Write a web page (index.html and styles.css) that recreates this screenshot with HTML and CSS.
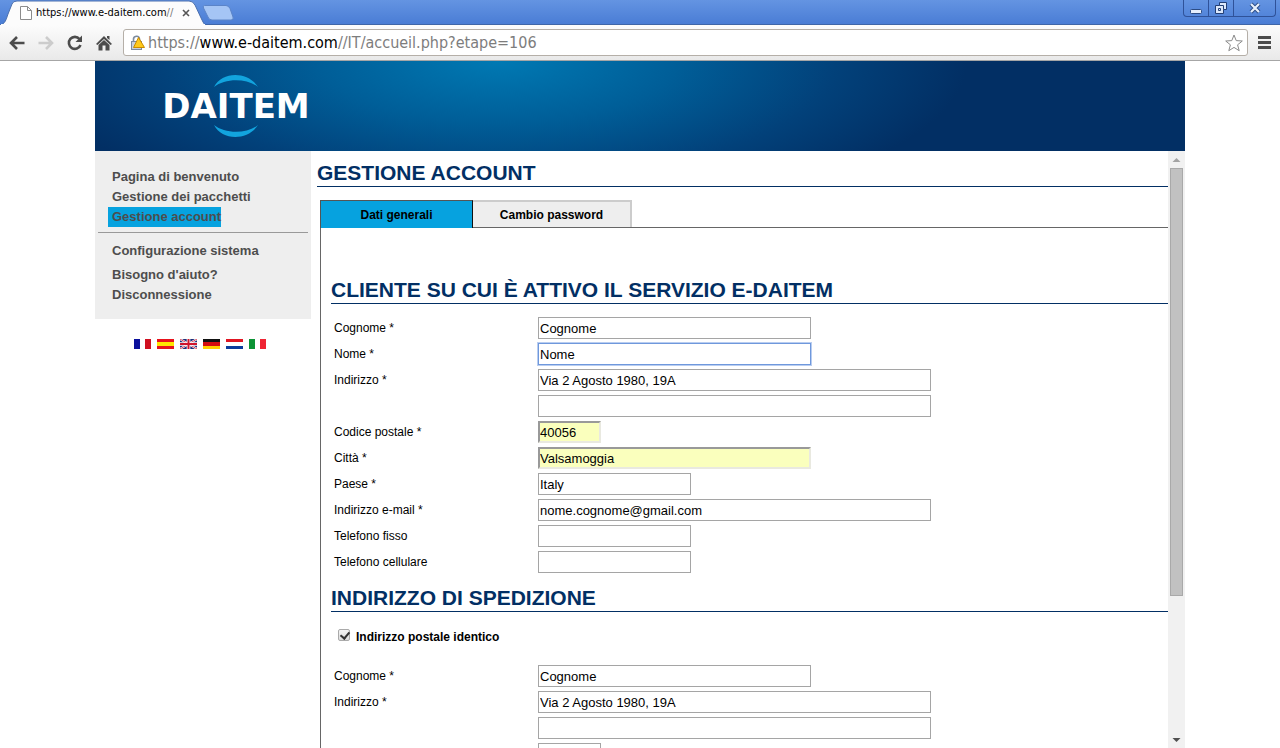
FILE: index.html
```html
<!DOCTYPE html>
<html lang="it">
<head>
<meta charset="utf-8">
<title>Gestione account</title>
<link rel="stylesheet" href="styles.css">
</head>
<body>
<div class="tabstrip">
  <div class="browser-tab">
    <svg class="tab-shape" width="206" height="25" viewBox="0 0 206 25" aria-hidden="true"><path d="M0 25C5 24 6 20 8 14L12 4Q13 1 17 1H189Q193 1 195 5L202 20Q204 25 206 25Z" fill="#fcfcfc" stroke="#4a6fae" stroke-width="1"/><path d="M1 25H205" stroke="#fcfcfc" stroke-width="2"/></svg>
    <svg class="page-icon" width="12" height="14" viewBox="0 0 12 14" aria-hidden="true"><path d="M.5.5H7.5L11.5 4.500V13.500H.5ZM7.500.5V4.500H11.500" fill="#fff" stroke="#8c8c8c"/></svg>
    <span class="tab-title">https://www.e-daitem.com<span class="faded">//</span></span>
    <button class="tab-close" aria-label="Chiudi scheda"><svg width="8" height="8" viewBox="0 0 8 8"><path d="M1 1L7 7M7 1L1 7" stroke="#555" stroke-width="1.600"/></svg></button>
  </div>
  <button class="new-tab" aria-label="Nuova scheda"><svg width="32" height="16" viewBox="0 0 32 16"><path d="M2.500.5H24Q26.500.5 28 3.500L31 12Q32 15 29 15H10Q7 15 6 12L1.500 3Q.5.5 2.500.5Z" fill="#a5c5f5" stroke="#5b84c8"/></svg></button>
  <div class="window-buttons">
    <button aria-label="Riduci a icona"><svg width="12" height="14" viewBox="0 0 12 14"><rect x=".5" y="8.500" width="11" height="4" rx="1" fill="#e5eefc" stroke="#2c4c85"/></svg></button>
    <button aria-label="Ripristina"><svg width="12" height="14" viewBox="0 0 12 14"><path d="M4.500 1.500H11.500V8.500H8.500V12.500H.5V4.500H4.500Z" fill="#dce8fb" stroke="#233f75"/><path d="M4.500 4.500H8.500V8.500M3.500 7.500H5.500V9.500H3.500Z" fill="none" stroke="#233f75"/></svg></button>
    <button class="close" aria-label="Chiudi"><svg width="12" height="14" viewBox="0 0 12 14"><path d="M2 3L10 11M10 3L2 11" stroke="#2c4c85" stroke-width="4"/><path d="M2 3L10 11M10 3L2 11" stroke="#e8f0fc" stroke-width="2.200"/></svg></button>
  </div>
</div>
<div class="toolbar">
  <div class="nav-group">
    <button class="nav" aria-label="Indietro"><svg width="16" height="14" viewBox="0 0 16 14"><path d="M15.500 7H2.500M8 1L2 7L8 13" fill="none" stroke="#4c4c4c" stroke-width="2.600"/></svg></button>
    <button class="nav" aria-label="Avanti"><svg width="16" height="14" viewBox="0 0 16 14"><path d="M.5 7H13.500M8 1L14 7L8 13" fill="none" stroke="#ccc" stroke-width="2.600"/></svg></button>
    <button class="nav" aria-label="Ricarica"><svg width="16" height="16" viewBox="0 0 16 16"><path d="M12.500 4A6 6 0 1 0 13.500 10" fill="none" stroke="#4c4c4c" stroke-width="2.600"/><path d="M15 .5V7H8.500Z" fill="#4c4c4c"/></svg></button>
    <button class="nav" aria-label="Pagina iniziale"><svg width="16" height="16" viewBox="0 0 16 16"><path d="M8 1L16 9L14.500 10L8 4L1.500 10L0 9ZM11 1H13.500V5L11 3ZM2.500 10L8 5L13.500 10V15.500H9.500V10.500H6.500V15.500H2.500Z" fill="#4c4c4c"/></svg></button>
  </div>
  <div class="omnibox">
    <svg width="16" height="16" viewBox="0 0 16 16" aria-hidden="true"><path d="M3.500 6V4.500A3 3 0 0 1 9.500 4V6" fill="none" stroke="#7d8b9e" stroke-width="1.600"/><rect x="1.500" y="6.500" width="10" height="8" fill="#c9d1de" stroke="#7d8b9e"/><path d="M8.500 2.500L14.500 12.500H3.500Z" fill="#ffc91a" stroke="#c98b00" stroke-linejoin="round"/></svg>
    <div class="url"><span>https://</span>www.e-daitem.com<span>//IT/accueil.php?etape=106</span></div>
    <button class="star" aria-label="Preferiti"><svg width="18" height="18" viewBox="0 0 18 18"><path d="M9 1L11.200 6.600L17.300 7L12.600 10.800L14.200 16.700L9 13.400L3.800 16.700L5.400 10.800L.7 7L6.800 6.600Z" fill="#fff" stroke="#8a8a8a" stroke-linejoin="round"/></svg></button>
  </div>
  <button class="menu" aria-label="Menu"><svg width="13" height="13" viewBox="0 0 13 13"><path d="M0 1.500H13M0 6.500H13M0 11.500H13" stroke="#4c4c4c" stroke-width="3"/></svg></button>
</div>

<div class="site">
  <header class="banner">
    <div class="logo">
      <svg width="44" height="12" viewBox="0 0 44 12" aria-hidden="true"><path d="M0 12C8-4 34-4 44 12C33 3 11 3 0 12Z" fill="#12a4de"/></svg>
      <span>DAITEM</span>
      <svg width="44" height="12" viewBox="0 0 44 12" aria-hidden="true"><path d="M0 0C8 16 34 16 44 0C33 9 11 9 0 0Z" fill="#12a4de"/></svg>
    </div>
  </header>
  <div class="columns">
    <aside class="side">
      <nav class="menu-box">
        <a href="#">Pagina di benvenuto</a>
        <a href="#">Gestione dei pacchetti</a>
        <a href="#" class="current">Gestione account</a>
        <hr>
        <a href="#" class="config">Configurazione sistema</a>
        <a href="#">Bisogno d'aiuto?</a>
        <a href="#">Disconnessione</a>
      </nav>
      <div class="flags">
        <a href="#" aria-label="Français"><svg width="17" height="10"><rect width="17" height="10" fill="#fff"/><rect width="6" height="10" fill="#0b109c"/><rect x="11" width="6" height="10" fill="#cf1020"/></svg></a>
        <a href="#" aria-label="Español"><svg width="17" height="10"><rect width="17" height="10" fill="#e8121b"/><rect y="3" width="17" height="4" fill="#ffe600"/></svg></a>
        <a href="#" aria-label="English"><svg width="17" height="10" viewBox="0 0 17 10"><rect width="17" height="10" fill="#1d2f78"/><path d="M0 0L17 10M17 0L0 10" stroke="#fff" stroke-width="2"/><path d="M0 0L17 10M17 0L0 10" stroke="#d0142c" stroke-width=".8"/><path d="M8.500 0V10M0 5H17" stroke="#fff" stroke-width="3.600"/><path d="M8.500 0V10M0 5H17" stroke="#d0142c" stroke-width="2"/></svg></a>
        <a href="#" aria-label="Deutsch"><svg width="17" height="10"><rect width="17" height="10" fill="#111"/><rect y="3" width="17" height="4" fill="#d40d10"/><rect y="7" width="17" height="3" fill="#ffcf00"/></svg></a>
        <a href="#" aria-label="Nederlands"><svg width="17" height="10"><rect width="17" height="10" fill="#fff"/><rect width="17" height="3" fill="#e01522"/><rect y="7" width="17" height="3" fill="#0b3c9c"/></svg></a>
        <a href="#" aria-label="Italiano"><svg width="17" height="10"><rect width="17" height="10" fill="#fff"/><rect width="6" height="10" fill="#0b9335"/><rect x="11" width="6" height="10" fill="#ef2433"/></svg></a>
      </div>
    </aside>
    <main class="content">
      <h1>GESTIONE ACCOUNT</h1>
      <div class="tabs">
        <button class="tab active">Dati generali</button>
        <button class="tab">Cambio password</button>
      </div>
      <form class="panel">
        <h2>CLIENTE SU CUI È ATTIVO IL SERVIZIO E-DAITEM</h2>
        <div class="fields">
          <label for="cognome">Cognome *</label><input id="cognome" class="mid" value="Cognome">
          <label for="nome">Nome *</label><input id="nome" class="mid focused" value="Nome">
          <label for="ind1">Indirizzo *</label><input id="ind1" class="long" value="Via 2 Agosto 1980, 19A">
          <span></span><input class="long" aria-label="Indirizzo, seconda riga">
          <label for="cap">Codice postale *</label><input id="cap" class="tiny filled" value="40056">
          <label for="citta">Città *</label><input id="citta" class="mid filled" value="Valsamoggia">
          <label for="paese">Paese *</label><input id="paese" class="short" value="Italy">
          <label for="email">Indirizzo e-mail *</label><input id="email" class="long" value="nome.cognome@gmail.com">
          <label for="fisso">Telefono fisso</label><input id="fisso" class="short">
          <label for="cell">Telefono cellulare</label><input id="cell" class="short">
        </div>
        <h2>INDIRIZZO DI SPEDIZIONE</h2>
        <div class="same"><input type="checkbox" id="same" checked><label for="same">Indirizzo postale identico</label></div>
        <div class="fields">
          <label for="cognome2">Cognome *</label><input id="cognome2" class="mid" value="Cognome">
          <label for="ind2">Indirizzo *</label><input id="ind2" class="long" value="Via 2 Agosto 1980, 19A">
          <span></span><input class="long" aria-label="Indirizzo di spedizione, seconda riga">
          <span></span><input class="tiny" aria-label="Codice postale di spedizione">
        </div>
      </form>
    </main>
    <div class="scrollbar" aria-hidden="true">
      <svg width="17" height="17" viewBox="0 0 17 17"><path d="M4.500 11H12.500L8.500 7Z" fill="#a3a3a3"/></svg>
      <div class="track"><div class="thumb"></div></div>
      <svg width="17" height="17" viewBox="0 0 17 17"><path d="M4.500 7H12.500L8.500 11Z" fill="#505050"/></svg>
    </div>
  </div>
</div>
</body>
</html>
```
FILE: styles.css
```css
* { box-sizing: border-box; }

body {
  margin: 0;
  height: 100vh;
  display: flex;
  flex-direction: column;
  overflow: hidden;
  background: #fff;
  color: #000;
  font: 12px/16px "Liberation Sans", Arial, sans-serif;
}

button {
  border: 0;
  padding: 0;
  background: none;
  color: inherit;
  font: inherit;
}

svg { display: block; flex: none; }
h1, h2 { margin: 0; }

/* browser frame */
.tabstrip {
  flex: none;
  display: flex;
  align-items: flex-start;
  height: 25px;
  background: linear-gradient(#6494e2, #4a7dd5);
  border-bottom: 1px solid #3f66a8;
}

.browser-tab {
  position: relative;
  display: flex;
  align-items: center;
  width: 206px;
  height: 25px;
  padding-left: 20px;
}

.tab-shape { position: absolute; left: 0; top: 0; }
.page-icon { position: relative; }

.tab-title {
  position: relative;
  width: 144px;
  padding-left: 4px;
  white-space: nowrap;
  font: 11px/16px "DejaVu Sans Condensed", Tahoma, sans-serif;
}

.faded { color: #777; }
.tab-close { position: relative; margin-left: 6px; }
.new-tab { margin: 5px 0 0 -4px; }

.window-buttons {
  display: flex;
  margin-left: auto;
  margin-right: 4px;
  height: 17px;
  border: 1px solid #2f5299;
  border-top: 0;
  border-radius: 0 0 4px 4px;
}

.window-buttons button {
  display: flex;
  justify-content: center;
  align-items: center;
  width: 25px;
  border-right: 1px solid #2f5299;
}

.window-buttons .close { width: 41px; border-right: 0; }

.toolbar {
  flex: none;
  display: flex;
  align-items: center;
  gap: 10px;
  height: 36px;
  padding: 0 9px;
  background: linear-gradient(#fcfcfc, #e9e9e9);
  border-bottom: 1px solid #a6a6a6;
}

.nav-group { display: flex; align-items: center; gap: 12px; }
.nav { width: 17px; }

.omnibox {
  flex: 1;
  display: flex;
  align-items: center;
  gap: 2px;
  height: 27px;
  padding: 0 4px 0 6px;
  background: #fff;
  border: 1px solid #b5afa8;
  border-radius: 3px;
}

.url {
  flex: 1;
  font: 16px/20px "DejaVu Sans Condensed", Tahoma, sans-serif;
}

.url span { color: #7d7d7d; }

/* site */
.site {
  flex: 1;
  min-height: 0;
  display: flex;
  flex-direction: column;
  width: 100%;
  max-width: 1090px;
  margin: 0 auto;
}

.banner {
  flex: none;
  height: 90px;
  padding: 14px 0 0 65px;
  background: radial-gradient(ellipse 43% 180% at 37% 0, #0079b3, #005e98 38%, #02417a 72%, #022f64);
}

.logo {
  display: flex;
  flex-direction: column;
  align-items: center;
  width: 152px;
}

.logo span {
  color: #fff;
  font: bold 34px/38px "DejaVu Sans", Verdana, sans-serif;
}

.columns {
  flex: 1;
  min-height: 0;
  display: flex;
}

.side { flex: none; width: 216px; }

.menu-box {
  display: flex;
  flex-direction: column;
  align-items: flex-start;
  padding: 16px 3px 14px;
  background: #eee;
}

.menu-box a {
  margin-left: 10px;
  padding-left: 4px;
  color: #4d4d4d;
  font: bold 13px/20px "Liberation Sans", Arial, sans-serif;
  text-decoration: none;
}

.menu-box .current { background: #06a2df; }
.menu-box .config { margin-bottom: 4px; }

.menu-box hr {
  width: 100%;
  margin: 5px 0 8px;
  border: 0;
  border-top: 1px solid #999;
}

.flags {
  display: flex;
  justify-content: center;
  gap: 6px;
  padding: 20px 6px 0 0;
}

.content {
  flex: 1;
  min-width: 0;
  overflow: hidden;
  padding: 9px 0 0 6px;
}

h1, h2 {
  color: #022f64;
  border-bottom: 1px solid #022f64;
  font: bold 21px/26px "Liberation Sans", Arial, sans-serif;
}

.tabs {
  display: flex;
  margin: 13px 0 0 3px;
}

.tab {
  width: 159px;
  height: 27px;
  background: #eee;
  border: 2px solid #ccc;
  border-width: 2px 2px 0 0;
  font-weight: bold;
}

.tab.active {
  position: relative;
  width: 153px;
  height: 28px;
  margin-bottom: -1px;
  background: #06a2df;
  border: 1px solid #555;
  border-right-color: #111;
  border-bottom: 0;
}

.panel {
  margin-left: 3px;
  padding: 49px 0 0 10px;
  border: 1px solid #666;
  border-width: 1px 0 0 1px;
}

.fields {
  display: grid;
  grid-template-columns: 204px 1fr;
  gap: 4px 0;
  padding: 13px 0 12px 3px;
}

.fields label { line-height: 22px; }

.fields input {
  height: 22px;
  padding: 1px;
  background: #fff;
  border: 1px solid #a5a5a5;
  outline: 0;
  color: #000;
  font: 13px/18px "Liberation Sans", Arial, sans-serif;
}

.fields .tiny { width: 63px; }
.fields .short { width: 153px; }
.fields .mid { width: 273px; }
.fields .long { width: 393px; }

.fields .focused {
  border-color: #6f98dc;
  box-shadow: 0 0 0 1px #b9cdf0;
}

.fields .filled {
  padding: 0;
  background: #faffbd;
  border: 2px solid #999;
  border-right-color: #e9e9e0;
  border-bottom-color: #e9e9e0;
}

.same {
  display: flex;
  align-items: center;
  gap: 6px;
  padding: 17px 0 7px 7px;
  font-weight: bold;
}

.same input {
  appearance: none;
  width: 12px;
  height: 12px;
  margin: 0 0 4px;
  border: 1px solid #aaa;
  border-radius: 2px;
  background: linear-gradient(#f4f4f4, #ddd);
}

.same input::after {
  content: "";
  display: block;
  width: 4px;
  height: 7px;
  margin: 0 0 0 3px;
  border: solid #333;
  border-width: 0 2px 2px 0;
  transform: rotate(40deg);
}

.scrollbar {
  flex: none;
  display: flex;
  flex-direction: column;
  width: 17px;
  background: #f1f1f1;
}

.track { flex: 1; padding: 0 2px; }

.thumb {
  height: 76%;
  background: #c1c1c1;
  border: 1px solid #a9a9a9;
}
```
